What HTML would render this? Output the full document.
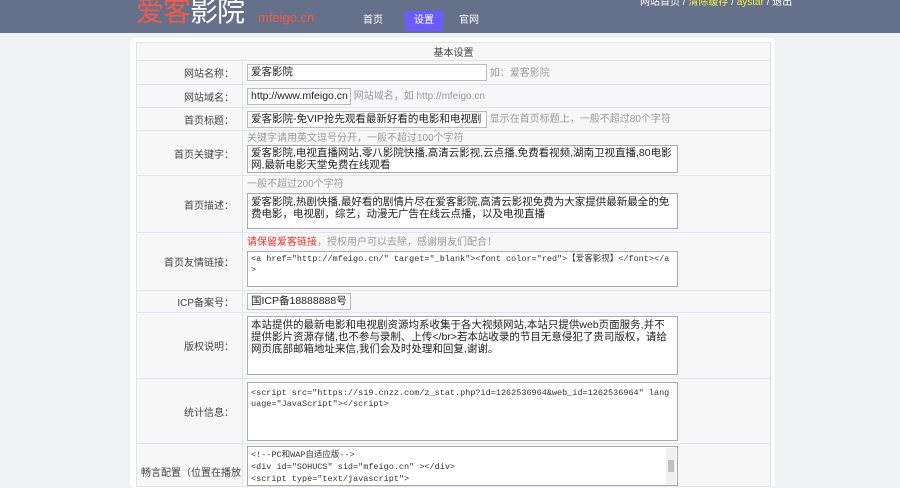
<!DOCTYPE html>
<html><head><meta charset="utf-8"><style>
*{margin:0;padding:0;box-sizing:border-box}
body{width:900px;height:477px;overflow:hidden;background:#f0f1f4;font-family:"Liberation Sans","Noto Sans CJK SC",sans-serif;font-size:10px;color:#333;position:relative}
.hd{position:absolute;left:0;top:0;width:900px;height:33px;background:#65708a}
.logo{position:absolute;left:136px;top:-4px;font-size:28px;line-height:32px;letter-spacing:-1px;white-space:nowrap}
.logo .r{color:#f05a4a}.logo .w{color:#fff}
.dom{position:absolute;left:258px;top:10px;color:#f05a4a;font-size:13px}
.nav{position:absolute;top:11px;height:20px;line-height:20px;color:#fff;font-size:10px;text-align:center;width:38px}
.top{position:absolute;left:640px;top:-7px;color:#fff;font-size:10px;white-space:nowrap}
.top span{color:#ee4}
.box{position:absolute;left:130px;top:38px;width:645px;height:450px;background:#fff;border-radius:5px}
.t{position:absolute;left:136px;top:42px;width:634px;border-collapse:collapse;background:#f7f7f7;table-layout:fixed}
.t td{border:1px solid #dfe5ef;vertical-align:middle;padding:0 4px;white-space:nowrap;overflow:hidden}
.t td.l{text-align:right;color:#444;padding:0 8px 0 0}
.in{border:1px solid #bbb;background:#fff;height:17px;line-height:15px;padding:0 3px;font-size:10.5px;color:#222;display:inline-block;vertical-align:middle;overflow:hidden;white-space:nowrap}
.ta{border:1px solid #aaa;background:#fff;width:431px;padding:2px 3px;font-size:10.5px;line-height:13px;color:#222;position:relative;white-space:normal;overflow:hidden;word-break:break-all}
.mono{font-family:"Liberation Mono","Noto Sans CJK SC",monospace;font-size:8.5px;color:#333}
.hint{color:#999;font-size:10px}
</style></head><body>
<div class="hd"></div>
<div class="logo"><span class="r">爱客</span><span class="w">影院</span></div>
<div class="dom">mfeigo.cn</div>
<div class="nav" style="left:354px">首页</div>
<div class="nav" style="left:405px;background:#6a5cff">设置</div>
<div class="nav" style="left:450px">官网</div>
<div class="top">网站首页 / <span>清除缓存</span> / <span>aystar</span> / 退出</div>
<div class="box"></div>
<table class="t">
<colgroup><col style="width:106px"><col style="width:528px"></colgroup>
<tr style="height:18px"><td colspan="2" style="text-align:center;color:#444">基本设置</td></tr>
<tr style="height:24px"><td class="l">网站名称：</td><td><span class="in" style="width:240px">爱客影院</span> <span class="hint">如：爱客影院</span></td></tr>
<tr style="height:23px"><td class="l">网站域名：</td><td><span class="in" style="width:104px">http://www.mfeigo.cn</span> <span class="hint">网站域名，如 http://mfeigo.cn</span></td></tr>
<tr style="height:23px"><td class="l">首页标题：</td><td><span class="in" style="width:240px">爱客影院-免VIP抢先观看最新好看的电影和电视剧</span> <span class="hint">显示在首页标题上，一般不超过80个字符</span></td></tr>
<tr style="height:45px"><td class="l">首页关键字：</td><td><div class="hint" style="line-height:12px">关键字请用英文逗号分开，一般不超过100个字符</div><div class="ta" style="height:28px;line-height:12px;padding-top:1px">爱客影院,电视直播网站,零八影院快播,高清云影视,云点播,免费看视频,湖南卫视直播,80电影网,最新电影天堂免费在线观看</div></td></tr>
<tr style="height:57px"><td class="l">首页描述：</td><td><div class="hint" style="line-height:16px">一般不超过200个字符</div><div class="ta" style="height:36px;line-height:12px;margin-bottom:3px">爱客影院,热剧快播,最好看的剧情片尽在爱客影院,高清云影视免费为大家提供最新最全的免费电影，电视剧，综艺，动漫无广告在线云点播，以及电视直播</div></td></tr>
<tr style="height:58px"><td class="l">首页友情链接：</td><td><div style="color:#e33;font-size:10px;line-height:17px">请保留爱客链接<span class="hint">，授权用户可以去除，感谢朋友们配合！</span></div><div class="ta mono" style="height:36px;line-height:11px;margin-bottom:3px">&lt;a href="http://mfeigo.cn/" target="_blank"&gt;&lt;font color="red"&gt;【爱客影视】&lt;/font&gt;&lt;/a&gt;</div></td></tr>
<tr style="height:22px"><td class="l">ICP备案号：</td><td><span class="in" style="width:104px">国ICP备18888888号</span></td></tr>
<tr style="height:66px"><td class="l">版权说明：</td><td><div class="ta" style="height:59px;line-height:12px">本站提供的最新电影和电视剧资源均系收集于各大视频网站,本站只提供web页面服务,并不提供影片资源存储,也不参与录制、上传&lt;/br&gt;若本站收录的节目无意侵犯了贵司版权，请给网页底部邮箱地址来信,我们会及时处理和回复,谢谢。</div></td></tr>
<tr style="height:65px"><td class="l">统计信息：</td><td><div class="ta mono" style="height:59px;line-height:11px;padding-top:5px">&lt;script src="https://s19.cnzz.com/z_stat.php?id=1262536964&amp;web_id=1262536964" language="JavaScript"&gt;&lt;/script&gt;</div></td></tr>
<tr style="height:40px"><td class="l" style="vertical-align:top;padding-top:20px;text-align:left;padding-left:4px">畅言配置（位置在播放</td><td style="vertical-align:top;padding-top:2px"><div class="ta mono" style="height:40px;line-height:12px;white-space:nowrap">&lt;!--PC和WAP自适应版--&gt;<br>&lt;div id="SOHUCS" sid="mfeigo.cn" &gt;&lt;/div&gt;<br>&lt;script type="text/javascript"&gt;<div style="position:absolute;right:1px;top:1px;width:10px;height:38px;background:#f0f0f0"><div style="margin-top:12px;height:12px;background:#c1c1c1;margin-left:2px;width:6px"></div></div></div></td></tr>
</table>
</body></html>
